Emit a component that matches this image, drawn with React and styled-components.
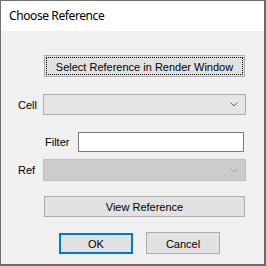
import React from 'react';
import styled, { createGlobalStyle } from 'styled-components';

const GlobalStyle = createGlobalStyle`
  * { box-sizing: border-box; }
  html, body { margin: 0; padding: 0; background: #f0f0f0; }
`;

const Window = styled.div`
  width: 266px;
  height: 266px;
  display: flex;
  flex-direction: column;
  background: #f0f0f0;
  border-top: 1px solid #707070;
  border-left: 1px solid #707070;
  border-right: 2px solid #6a6a6a;
  border-bottom: 2px solid #6a6a6a;
  font-family: 'Liberation Sans', Arial, sans-serif;
  font-size: 11px;
  color: #000;
`;

const TitleBar = styled.div`
  height: 30px;
  flex: 0 0 30px;
  background: #ffffff;
  display: flex;
  align-items: center;
  padding-left: 8px;
  padding-bottom: 1px;
  font-family: 'Noto Sans', 'Open Sans', sans-serif;
  font-size: 12px;
  letter-spacing: -0.4px;
`;

const Body = styled.div`
  display: flex;
  flex-direction: column;
`;

const Row = styled.div`
  display: flex;
  align-items: center;
  margin-top: ${(p) => p.mt}px;
  padding-left: ${(p) => p.pl}px;
  gap: ${(p) => p.gap || 0}px;
`;

const Label = styled.span`
  width: ${(p) => p.w}px;
  flex: 0 0 auto;
`;

const Button = styled.div`
  width: ${(p) => p.w}px;
  height: ${(p) => p.h}px;
  display: flex;
  align-items: center;
  justify-content: center;
  position: relative;
  background: #e1e1e1;
  border: ${(p) => (p.primary ? '2px solid #0078d7' : '1px solid #adadad')};
  padding-top: 1px;
`;

const FocusRing = styled.div`
  position: absolute;
  inset: 1px;
  border: 1px dotted #000;
`;

const Combo = styled.div`
  width: 203px;
  height: ${(p) => p.h}px;
  display: flex;
  align-items: center;
  justify-content: flex-end;
  padding-right: 7px;
  background: ${(p) => (p.disabled ? '#cccccc' : '#e5e5e5')};
  border: 1px solid ${(p) => (p.disabled ? '#bfbfbf' : '#adadad')};
`;

const TextInput = styled.div`
  width: 166px;
  height: 20px;
  background: #ffffff;
  border: 1px solid #7a7a7a;
`;

function Chevron({ color }) {
  return (
    <svg width="8" height="5" viewBox="0 0 8 5">
      <polyline points="0.5,0.5 4,4 7.5,0.5" fill="none" stroke={color} strokeWidth="1" />
    </svg>
  );
}

export default function App() {
  return (
    <>
      <GlobalStyle />
      <Window>
        <TitleBar>Choose Reference</TitleBar>
        <Body>
          <Row mt={24} pl={43}>
            <Button w={201} h={22}>
              <FocusRing />
              Select Reference in Render Window
            </Button>
          </Row>
          <Row mt={17} pl={17}>
            <Label w={25}>Cell</Label>
            <Combo h={21}>
              <Chevron color="#606060" />
            </Combo>
          </Row>
          <Row mt={17} pl={44}>
            <Label w={33}>Filter</Label>
            <TextInput />
          </Row>
          <Row mt={7} pl={17}>
            <Label w={25}>Ref</Label>
            <Combo h={22} disabled>
              <Chevron color="#a6a6a6" />
            </Combo>
          </Row>
          <Row mt={15} pl={43}>
            <Button w={201} h={21}>View Reference</Button>
          </Row>
          <Row mt={15} pl={58} gap={13}>
            <Button w={74} h={21} primary>OK</Button>
            <Button w={74} h={22}>Cancel</Button>
          </Row>
        </Body>
      </Window>
    </>
  );
}
